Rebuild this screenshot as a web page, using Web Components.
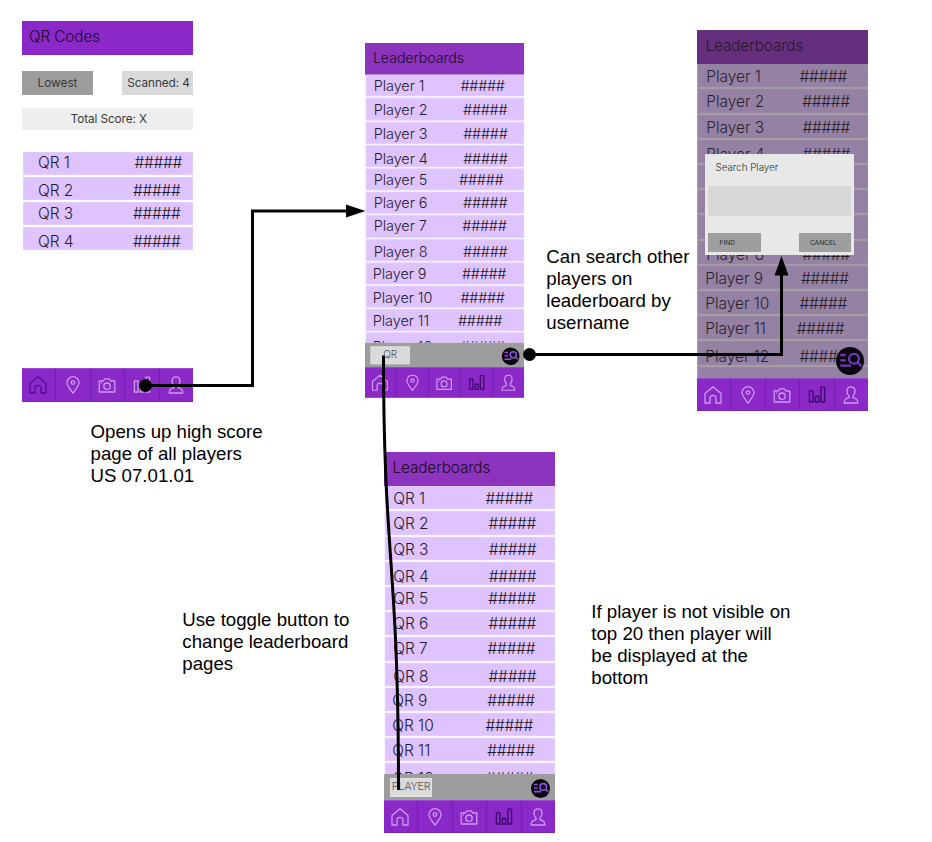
<!DOCTYPE html>
<html lang="en">
<head>
<meta charset="utf-8">
<title>Leaderboard flow</title>
<style>
html,body{margin:0;background:#fff}
body{width:932px;height:842px;overflow:hidden}
</style>
</head>
<body>
<flow-board></flow-board>
<script>
const define = (name, render) => customElements.define(name, class extends HTMLElement {
  connectedCallback() {
    if (this.shadowRoot) return;
    this.attachShadow({ mode: 'open' }).innerHTML = render(this).trim();
  }
});

const ICONS = {
  home: '<path d="M1 7.600 9 .8l8 6.800V17H12V12.300a3 3 0 0 0-6 0V17H1z"/>',
  pin: '<path d="M9 17.200C6 12.700 3 9.700 3 6.700a6 6 0 0 1 12 0C15 9.700 12 12.700 9 17.200z"/><circle cx="9" cy="6.600" r="1.800"/>',
  camera: '<path d="M1.200 5H5.200L6.700 2.800h4.600L12.800 5h4v11H1.200z"/><circle cx="9" cy="10.200" r="3.200"/><path d="M3 7.200h1"/>',
  bars: '<path d="M1.400 4.800h3.600v11.200H1.400zM7.300 10.500h3.400V16H7.300zM12.900 1.200h3.700V16h-3.700z"/>',
  user: '<path d="M9 .8C6.300.8 5 2.600 5 5.300c0 2 .8 3.600 2 4.700v1.700L3.600 13.200c-1.300.7-1.400 2-1.400 3.800h13.600c0-1.800-.1-3.100-1.400-3.800L11 11.700V10c1.200-1.100 2-2.700 2-4.700C13 2.600 11.700.8 9 .8z"/>'
};

define('nav-cell', el => `
<style>
:host{flex:1;display:flex;align-items:center;justify-content:center;box-sizing:border-box;border-right:1px solid #731fad;color:#cf9bee}
:host(:last-child){border-right:0}
:host([active]){color:var(--active,#3d0866)}
svg{width:18px;height:18px;fill:none;stroke:currentColor;stroke-width:1.300;stroke-linejoin:round;margin:1px .6px 0 0}
:host(:first-child) svg{margin-right:1.500px}
:host(:last-child) svg{margin-right:0}
</style><svg viewBox="0 0 18 18">${ICONS[el.getAttribute('icon')]}</svg>`);

define('nav-bar', el => `
<style>:host{display:flex;height:33.500px;flex:none;box-sizing:border-box;background:#8a29c8;border-top:1px solid #9a48cf;border-bottom:1px solid #7c25b4}</style>
${Object.keys(ICONS).map(k => `<nav-cell icon="${k}" ${el.getAttribute('current') === k ? 'active' : ''}></nav-cell>`).join('')}`);

define('title-bar', () => `
<style>:host{display:block;box-sizing:border-box;flex:none;height:34px;padding:7.400px 0 0 var(--title-x,8.500px);background:var(--title-bg,#8c34bd);color:#1d0a2b;font:350 15.300px/18px Inter,sans-serif;letter-spacing:-.1px;white-space:nowrap}</style><slot></slot>`);

define('score-row', el => {
  const a = n => el.getAttribute(n);
  return `
<style>
:host{display:grid;grid-template-columns:${a('sx')}px 1fr;height:23.200px;box-sizing:border-box;background:#dec3ff;border:1px solid #e2cbff;margin-bottom:2px;flex:none;font:350 15.500px/20px Inter,sans-serif;color:#251d2f;white-space:nowrap}
span{display:block;margin-top:${a('dy')}px;height:20px;letter-spacing:-.05px}
.s{letter-spacing:-.3px;color:#1a1422}
.l{padding-left:${a('lx')}px}
</style>${a('label') ? `<span class="l">${a('label')}</span><span class="s">#####</span>` : ''}`;
});

define('tag-box', () => `
<style>:host{display:flex;align-items:center;justify-content:center;box-sizing:border-box;font:400 11.800px/14px Inter,sans-serif;color:#3a3a3a;white-space:nowrap}</style><slot></slot>`);

define('search-badge', () => `
<style>:host{display:block;border-radius:50%;background:#0b0710;color:#7338b5}svg{display:block;width:100%;height:100%}</style>
<svg viewBox="0 0 28 28" fill="none" stroke="currentColor" stroke-width="2.300"><path d="M4.300 8h5.400M4.300 13.300h5.400M4.300 18.600h10.700"/><circle cx="18" cy="11.700" r="4.900"/><path d="M21.500 15.200l4 4"/></svg>`);

define('tool-strip', () => `
<style>
:host{display:flex;align-items:flex-start;justify-content:space-between;flex:none;height:25.500px;box-sizing:border-box;background:#9d9d9d;padding:4px 5px 0 6.300px}
tag-box{width:41.500px;height:18.500px;background:#dadada;color:#555;border:1px solid #e2e2e2}
.t{font-size:10.800px;font-weight:300;letter-spacing:-.2px}
search-badge{width:19px;height:19px;margin-top:.5px;color:#9050e0}
</style><tag-box><span class="t"><slot></slot></span></tag-box><search-badge></search-badge>`);

const Y = [45.7,71.100,97.600,124.100,146,171,196.500,224.500,247.800,272.900,298.200,326.300];
const X = {
  Player: [102.700,105.500,105.700,105.700,101.300,105.500,104.700,105.600,104.300,102.700,100,102.700],
  QR: [101.700,104.700,105,105,104.500,104.700,103.800,104.800,103.500,101.700,103.500,102]
};
define('leader-phone', el => {
  const kind = el.getAttribute('kind');
  const rows = Y.map((y, i) =>
    `<score-row label="${kind} ${i + 1}" lx="${i < 8 ? 7.300 : 6.300}" sx="${X[kind][i] - 2.200}" dy="${(y - 34.300 - i * 25.200 - 10.100).toFixed(2)}"></score-row>`).join('');
  return `
<style>
:host{display:flex;flex-direction:column;width:171px;height:381px;background:#f9f4ff;overflow:hidden;font-family:Inter,sans-serif}
.list{flex:1;min-height:0;overflow:hidden;display:flex;flex-direction:column;padding:.3px 0 0 1px}
.stage{flex:1;min-height:0;display:flex;flex-direction:column;position:relative}
.shade{position:absolute;inset:0;background:rgba(50,42,45,.43)}
.dialog{position:absolute;left:8px;top:124px;width:149px;height:101px;background:#e8e8e8;box-sizing:border-box;padding:7px 3px 3px;display:flex;flex-direction:column;font:300 9.800px/14px Inter,sans-serif;color:#333}
.dialog .h{padding-left:7.500px}
.field{height:30px;margin-top:11px;background:#d8d8d8}
.btns{display:flex;justify-content:space-between;margin-top:auto}
.btns tag-box{width:52.500px;height:19px;background:#9e9e9e;font-size:6.600px;color:#2a2a2a;padding-right:14px}
.btns tag-box+tag-box{padding-right:3px}
search-badge{position:absolute;left:138.500px;top:316.500px;width:28px;height:28px}
</style>
<div class="stage"><title-bar>Leaderboards</title-bar><div class="list">${rows}${el.hasAttribute('dim') ? '<score-row sx="100"></score-row>' : ''}</div>
${el.hasAttribute('dim') ? `<div class="shade"></div><div class="dialog"><div class="h">Search Player</div><div class="field"></div><div class="btns"><tag-box>FIND</tag-box><tag-box>CANCEL</tag-box></div></div><search-badge></search-badge>` : `<tool-strip>${el.getAttribute('toggle')}</tool-strip>`}
</div><nav-bar current="bars"></nav-bar>`;
});

define('codes-phone', () => `
<style>
:host{display:flex;flex-direction:column;width:171px;height:381px;font-family:Inter,sans-serif}
title-bar{--title-bg:#8a29c8;--title-x:7px}
.tags{display:flex;justify-content:space-between;margin-top:16.500px}
.tags tag-box{width:71px;height:23.500px;background:#9d9d9d}
.tags tag-box+tag-box{background:#dadada;padding-left:2px;letter-spacing:-.1px}
.total{height:21.500px;margin:13.500px 0 22px;background:#eee;padding-left:2.500px;letter-spacing:-.1px}
nav-bar{margin-top:auto;--active:#560f8c}
.list{padding-left:1px}
</style>
<title-bar>QR Codes</title-bar>
<div class="tags"><tag-box>Lowest</tag-box><tag-box>Scanned: 4</tag-box></div>
<tag-box class="total">Total Score: X</tag-box>
<div class="list">${[11,39.200,61.700,89.700].map((y, i) => `<score-row label="QR ${i + 1}" lx="14" sx="${i ? 109 : 110.500}" dy="${(y - i * 25.200 - 10.500).toFixed(2)}"></score-row>`).join('')}</div>
<nav-bar current="home"></nav-bar>`);

define('flow-note', () => `
<style>:host{display:block;font:400 18.670px/22px "Liberation Sans",Arial,sans-serif;color:#000;white-space:pre}</style><slot></slot>`);

define('flow-board', () => `
<style>
:host{display:block;position:relative;width:932px;height:842px;overflow:hidden;background:#fff}
codes-phone,leader-phone,flow-note,svg{position:absolute}
svg{left:0;top:0}
</style>
<codes-phone style="left:22px;top:20.500px"></codes-phone>
<leader-phone kind="Player" toggle="QR" style="left:365px;top:43px;transform:scale(.931);transform-origin:0 0"></leader-phone>
<leader-phone kind="Player" dim style="left:697px;top:30px"></leader-phone>
<leader-phone kind="QR" toggle="PLAYER" style="left:384px;top:452px"></leader-phone>
<flow-note style="left:90.500px;top:421px">Opens up high score
page of all players
US 07.01.01</flow-note>
<flow-note style="left:546.300px;top:246px">Can search other
players on
leaderboard by
username</flow-note>
<flow-note style="left:182.300px;top:609px">Use toggle button to
change leaderboard
pages</flow-note>
<flow-note style="left:591.300px;top:601px">If player is not visible on
top 20 then player will
be displayed at the
bottom</flow-note>
<svg width="932" height="842" fill="none" stroke="#000" stroke-width="3">
<path d="M145.500 385.500H252.500V211H348M529 354.500H781.500V274M383.500 355.500C383.500 560 398.500 560 398.500 790"/>
<g fill="#000" stroke="none"><circle cx="145.500" cy="385.500" r="6.500"/><circle cx="529.500" cy="354.500" r="6.500"/><path d="M346 204.500 365.500 211 346 217.500zM774.500 275.500 781.500 256 788.500 275.500z"/></g>
</svg>`);
</script>
</body>
</html>
